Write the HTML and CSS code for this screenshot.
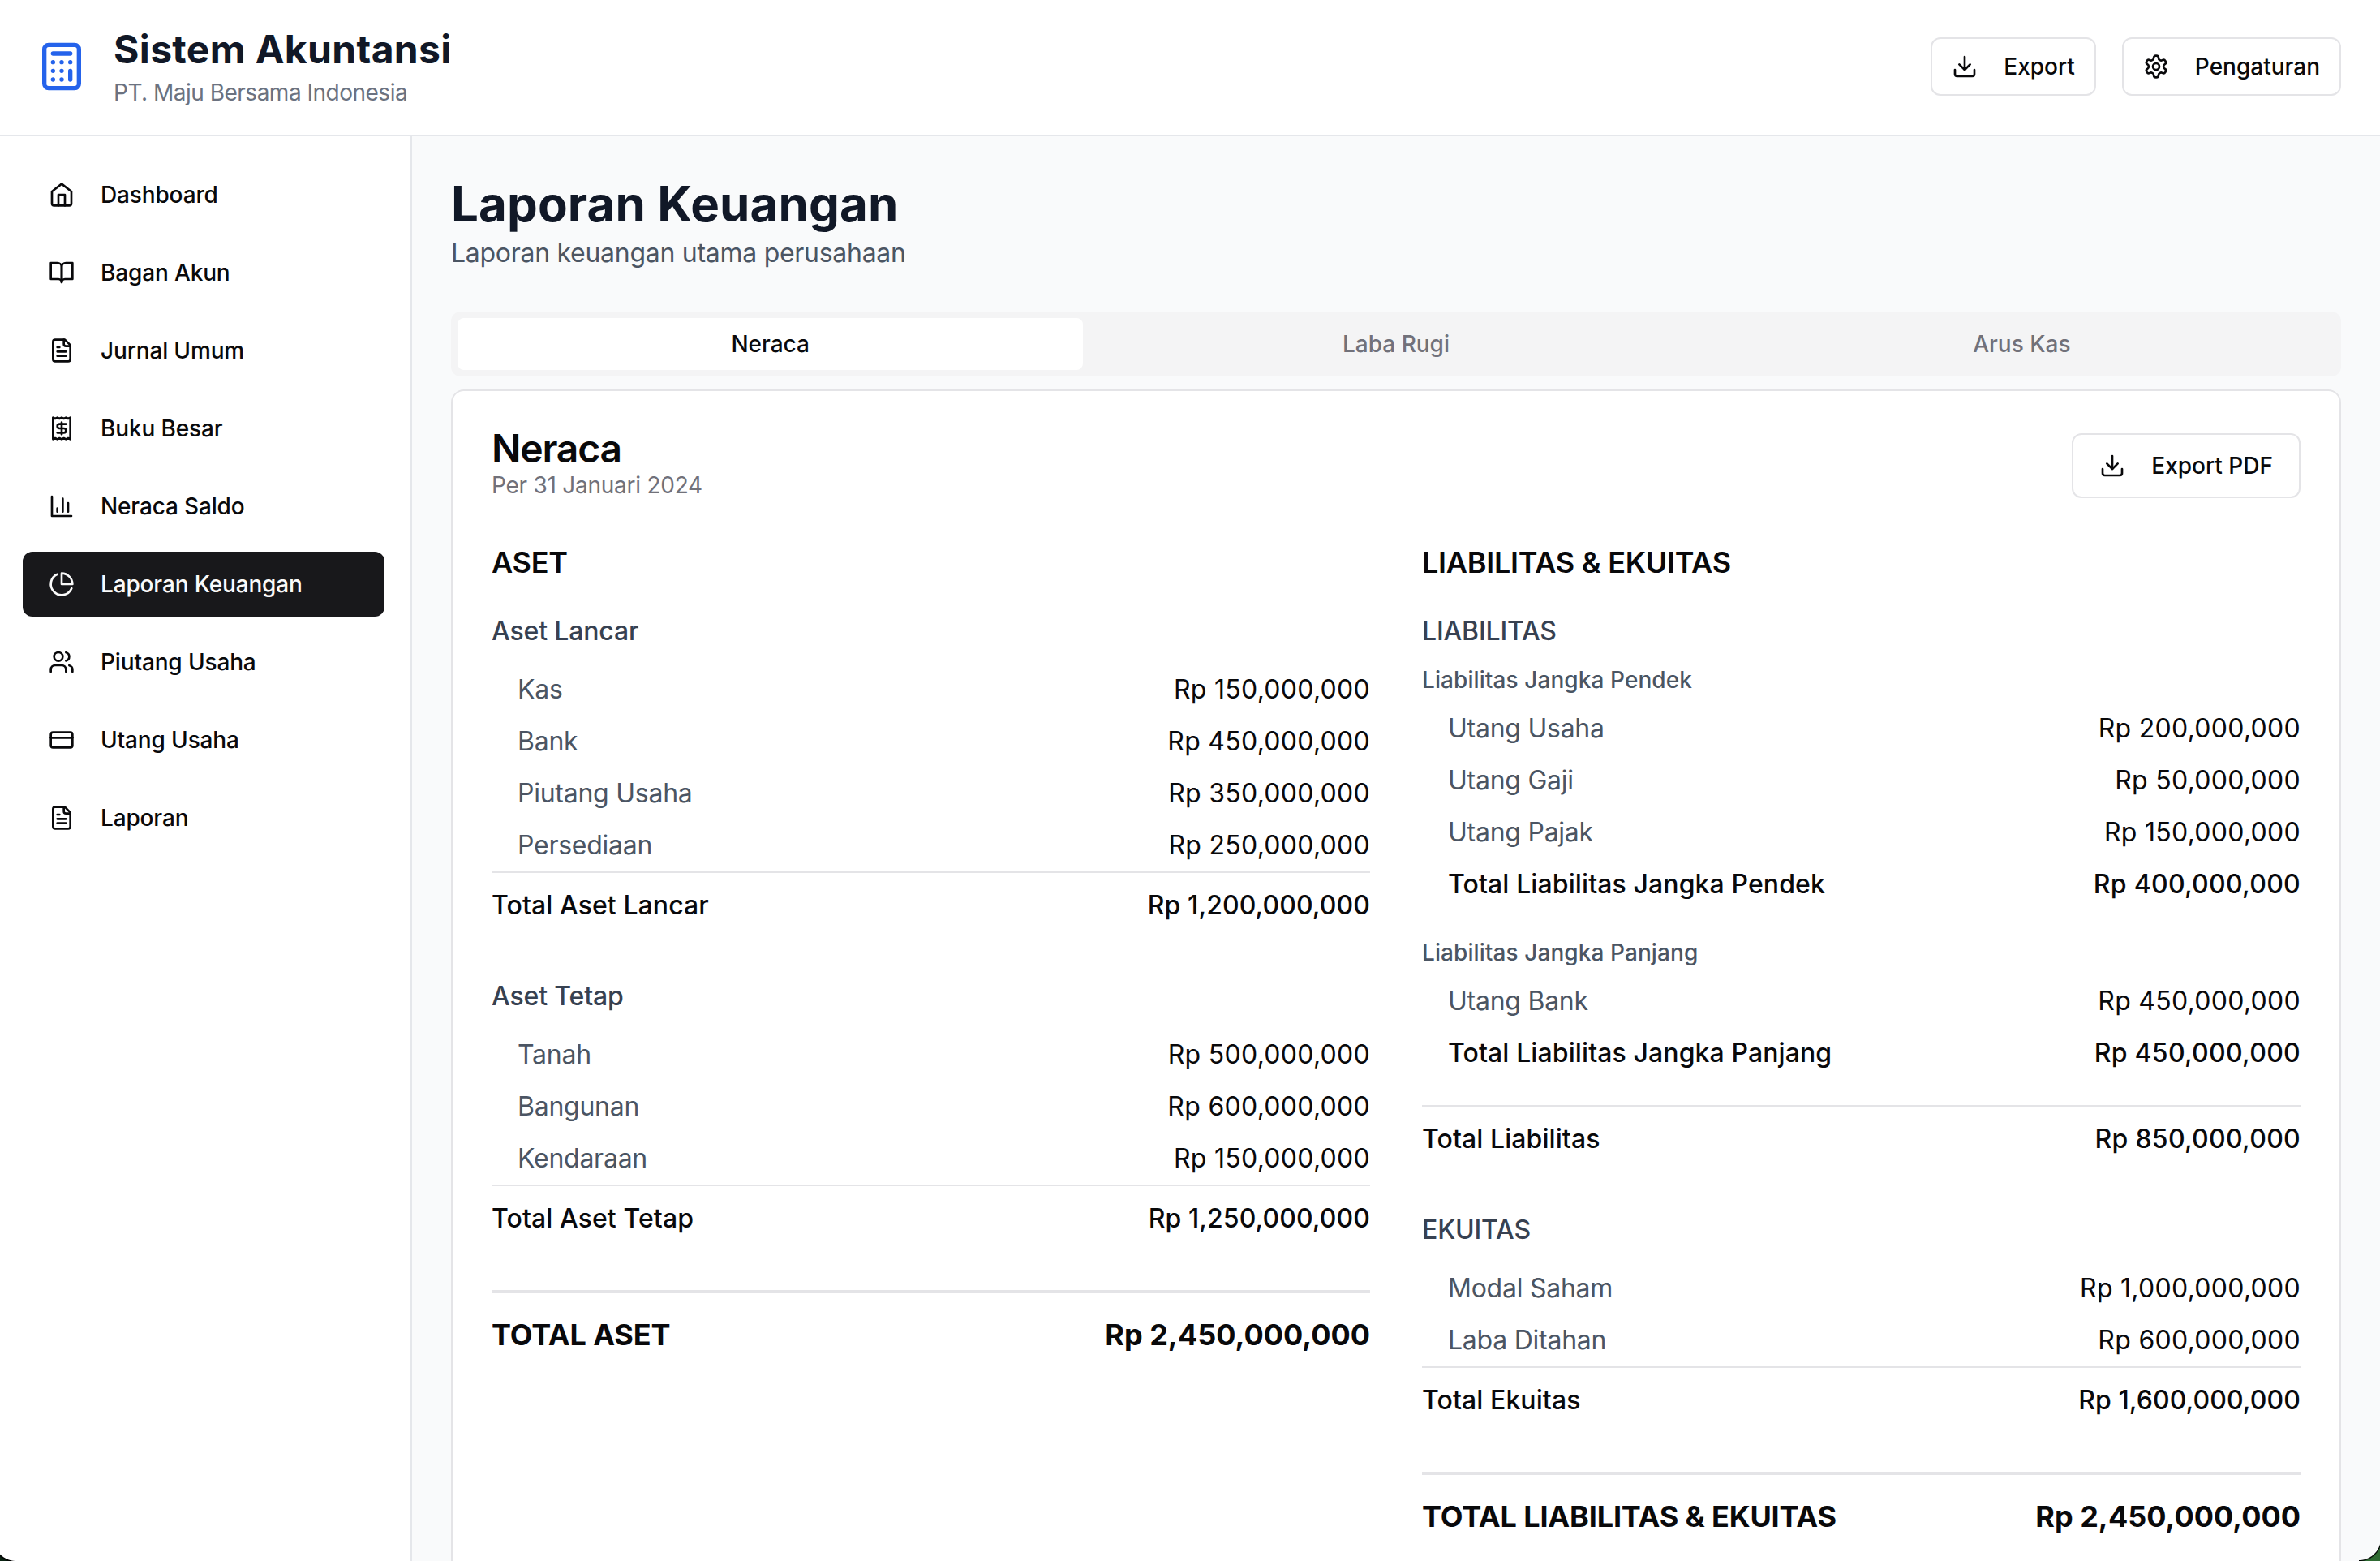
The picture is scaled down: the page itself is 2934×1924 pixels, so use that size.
FILE: index.html
```html
<!DOCTYPE html>
<html lang="id">
<head>
    <meta charset="UTF-8">
    <meta name="viewport" content="width=device-width, initial-scale=1.0">
    <title>Sistem Akuntansi</title>
    <link rel="stylesheet" href="styles.css">
</head>
<body>
    <!-- Header -->
    <header class="header">
        <div class="brand">
            <svg class="brand-icon" viewBox="0 0 24 24"><rect width="16" height="20" x="4" y="2" rx="2"/><path d="M8 6h8M16 14v4M16 10h.01M12 10h.01M8 10h.01M12 14h.01M8 14h.01M12 18h.01M8 18h.01"/></svg>
            <div>
                <h1 class="brand-title">Sistem Akuntansi</h1>
                <p class="brand-sub">PT. Maju Bersama Indonesia</p>
            </div>
        </div>
        <div class="header-actions">
            <button class="btn btn-sm">
                <svg class="icon" viewBox="0 0 24 24"><path d="M21 15v4a2 2 0 0 1-2 2H5a2 2 0 0 1-2-2v-4"/><path d="m7 10 5 5 5-5"/><path d="M12 15V3"/></svg>
                <span>Export</span>
            </button>
            <button class="btn btn-sm">
                <svg class="icon" viewBox="0 0 24 24"><path d="M12.22 2h-.44a2 2 0 0 0-2 2v.18a2 2 0 0 1-1 1.73l-.43.25a2 2 0 0 1-2 0l-.15-.08a2 2 0 0 0-2.73.73l-.22.38a2 2 0 0 0 .73 2.73l.15.1a2 2 0 0 1 1 1.72v.51a2 2 0 0 1-1 1.74l-.15.09a2 2 0 0 0-.73 2.73l.22.38a2 2 0 0 0 2.73.73l.15-.08a2 2 0 0 1 2 0l.43.25a2 2 0 0 1 1 1.73V20a2 2 0 0 0 2 2h.44a2 2 0 0 0 2-2v-.18a2 2 0 0 1 1-1.73l.43-.25a2 2 0 0 1 2 0l.15.08a2 2 0 0 0 2.73-.73l.22-.39a2 2 0 0 0-.73-2.73l-.15-.08a2 2 0 0 1-1-1.74v-.5a2 2 0 0 1 1-1.74l.15-.09a2 2 0 0 0 .73-2.73l-.22-.38a2 2 0 0 0-2.73-.73l-.15.08a2 2 0 0 1-2 0l-.43-.25a2 2 0 0 1-1-1.73V4a2 2 0 0 0-2-2z"/><circle cx="12" cy="12" r="3"/></svg>
                <span>Pengaturan</span>
            </button>
        </div>
    </header>

    <div class="layout">
        <!-- Sidebar -->
        <nav class="sidebar">
            <a class="nav-item">
                <svg class="icon" viewBox="0 0 24 24"><path d="m3 9 9-7 9 7v11a2 2 0 0 1-2 2H5a2 2 0 0 1-2-2z"/><path d="M9 22V12h6v10"/></svg>
                <span>Dashboard</span>
            </a>
            <a class="nav-item">
                <svg class="icon" viewBox="0 0 24 24"><path d="M2 3h6a4 4 0 0 1 4 4v14a3 3 0 0 0-3-3H2z"/><path d="M22 3h-6a4 4 0 0 0-4 4v14a3 3 0 0 1 3-3h7z"/></svg>
                <span>Bagan Akun</span>
            </a>
            <a class="nav-item">
                <svg class="icon" viewBox="0 0 24 24"><path d="M15 2H6a2 2 0 0 0-2 2v16a2 2 0 0 0 2 2h12a2 2 0 0 0 2-2V7Z"/><path d="M14 2v4a2 2 0 0 0 2 2h4"/><path d="M10 9H8M16 13H8M16 17H8"/></svg>
                <span>Jurnal Umum</span>
            </a>
            <a class="nav-item">
                <svg class="icon" viewBox="0 0 24 24"><path d="M4 2v20l2-1 2 1 2-1 2 1 2-1 2 1 2-1 2 1V2l-2 1-2-1-2 1-2-1-2 1-2-1-2 1Z"/><path d="M16 8h-6a2 2 0 1 0 0 4h4a2 2 0 1 1 0 4H8"/><path d="M12 17.5v-11"/></svg>
                <span>Buku Besar</span>
            </a>
            <a class="nav-item">
                <svg class="icon" viewBox="0 0 24 24"><path d="M3 3v18h18"/><path d="M18 17V9M13 17V5M8 17v-3"/></svg>
                <span>Neraca Saldo</span>
            </a>
            <a class="nav-item active">
                <svg class="icon" viewBox="0 0 24 24"><path d="M21.21 15.89A10 10 0 1 1 8 2.83"/><path d="M22 12A10 10 0 0 0 12 2v10z"/></svg>
                <span>Laporan Keuangan</span>
            </a>
            <a class="nav-item">
                <svg class="icon" viewBox="0 0 24 24"><path d="M16 21v-2a4 4 0 0 0-4-4H6a4 4 0 0 0-4 4v2"/><circle cx="9" cy="7" r="4"/><path d="M22 21v-2a4 4 0 0 0-3-3.87"/><path d="M16 3.13a4 4 0 0 1 0 7.75"/></svg>
                <span>Piutang Usaha</span>
            </a>
            <a class="nav-item">
                <svg class="icon" viewBox="0 0 24 24"><rect width="20" height="14" x="2" y="5" rx="2"/><path d="M2 10h20"/></svg>
                <span>Utang Usaha</span>
            </a>
            <a class="nav-item">
                <svg class="icon" viewBox="0 0 24 24"><path d="M15 2H6a2 2 0 0 0-2 2v16a2 2 0 0 0 2 2h12a2 2 0 0 0 2-2V7Z"/><path d="M14 2v4a2 2 0 0 0 2 2h4"/><path d="M10 9H8M16 13H8M16 17H8"/></svg>
                <span>Laporan</span>
            </a>
        </nav>

        <!-- Main Content -->
        <main class="main">
            <h2 class="page-title">Laporan Keuangan</h2>
            <p class="page-sub">Laporan keuangan utama perusahaan</p>

            <div class="tabs">
                <button class="tab active">Neraca</button>
                <button class="tab">Laba Rugi</button>
                <button class="tab">Arus Kas</button>
            </div>

            <section class="card">
                <div class="card-header">
                    <div>
                        <h3 class="card-title">Neraca</h3>
                        <p class="card-desc">Per 31 Januari 2024</p>
                    </div>
                    <button class="btn">
                        <svg class="icon" viewBox="0 0 24 24"><path d="M21 15v4a2 2 0 0 1-2 2H5a2 2 0 0 1-2-2v-4"/><path d="m7 10 5 5 5-5"/><path d="M12 15V3"/></svg>
                        <span>Export PDF</span>
                    </button>
                </div>

                <div class="columns">
                    <!-- Aset -->
                    <div class="column">
                        <h4 class="column-title">ASET</h4>
                        <div class="group">
                            <h5 class="group-title">Aset Lancar</h5>
                            <div class="row"><span class="label">Kas</span><span class="amount">Rp 150,000,000</span></div>
                            <div class="row"><span class="label">Bank</span><span class="amount">Rp 450,000,000</span></div>
                            <div class="row"><span class="label">Piutang Usaha</span><span class="amount">Rp 350,000,000</span></div>
                            <div class="row"><span class="label">Persediaan</span><span class="amount">Rp 250,000,000</span></div>
                            <div class="total"><span>Total Aset Lancar</span><span>Rp 1,200,000,000</span></div>
                        </div>
                        <div class="group">
                            <h5 class="group-title">Aset Tetap</h5>
                            <div class="row"><span class="label">Tanah</span><span class="amount">Rp 500,000,000</span></div>
                            <div class="row"><span class="label">Bangunan</span><span class="amount">Rp 600,000,000</span></div>
                            <div class="row"><span class="label">Kendaraan</span><span class="amount">Rp 150,000,000</span></div>
                            <div class="total"><span>Total Aset Tetap</span><span>Rp 1,250,000,000</span></div>
                        </div>
                        <div class="grand-total"><span class="grand-label">TOTAL ASET</span><span>Rp 2,450,000,000</span></div>
                    </div>

                    <!-- Liabilitas & Ekuitas -->
                    <div class="column">
                        <h4 class="column-title">LIABILITAS &amp; EKUITAS</h4>
                        <div class="group">
                            <h5 class="group-title">LIABILITAS</h5>
                            <div class="subgroup">
                                <h6 class="subgroup-title">Liabilitas Jangka Pendek</h6>
                                <div class="row"><span class="label">Utang Usaha</span><span class="amount">Rp 200,000,000</span></div>
                                <div class="row"><span class="label">Utang Gaji</span><span class="amount">Rp 50,000,000</span></div>
                                <div class="row"><span class="label">Utang Pajak</span><span class="amount">Rp 150,000,000</span></div>
                                <div class="row subtotal"><span>Total Liabilitas Jangka Pendek</span><span class="amount">Rp 400,000,000</span></div>
                            </div>
                            <div class="subgroup">
                                <h6 class="subgroup-title">Liabilitas Jangka Panjang</h6>
                                <div class="row"><span class="label">Utang Bank</span><span class="amount">Rp 450,000,000</span></div>
                                <div class="row subtotal"><span>Total Liabilitas Jangka Panjang</span><span class="amount">Rp 450,000,000</span></div>
                            </div>
                            <div class="total"><span>Total Liabilitas</span><span class="amount">Rp 850,000,000</span></div>
                        </div>
                        <div class="group">
                            <h5 class="group-title">EKUITAS</h5>
                            <div class="row"><span class="label">Modal Saham</span><span class="amount">Rp 1,000,000,000</span></div>
                            <div class="row"><span class="label">Laba Ditahan</span><span class="amount">Rp 600,000,000</span></div>
                            <div class="total"><span>Total Ekuitas</span><span>Rp 1,600,000,000</span></div>
                        </div>
                        <div class="grand-total"><span class="grand-label">TOTAL LIABILITAS &amp; EKUITAS</span><span>Rp 2,450,000,000</span></div>
                    </div>
                </div>
            </section>
        </main>
    </div>
</body>
</html>
```
FILE: styles.css
```css
* {
    box-sizing: border-box;
    margin: 0;
    padding: 0;
}

body {
    position: relative;
    height: 100vh;
    display: flex;
    flex-direction: column;
    overflow: hidden;
    font-family: Inter, sans-serif;
    font-size: 32px;
    line-height: 48px;
    color: #09090b;
    background-color: #f9fafb;
}

/* Rounded window corners */
body::before,
body::after {
    content: '';
    position: absolute;
    bottom: 0;
    width: 26px;
    height: 28px;
}

body::before {
    left: 0;
    width: 20px;
    background: radial-gradient(circle at 20px 0, transparent 27.5px, #000 28.5px, #0b2413 31px);
}

body::after {
    right: 0;
    background: radial-gradient(circle at 0 0, transparent 26.5px, #000 27.5px, #2f6b33 29px);
}

/* Header */
.header {
    flex-shrink: 0;
    display: flex;
    justify-content: space-between;
    align-items: center;
    height: 168px;
    padding: 30px 48px 32px 44px;
    background-color: #fff;
    border-bottom: 2px solid #e5e7eb;
}

.brand {
    display: flex;
    align-items: center;
    gap: 32px;
}

.brand-icon {
    width: 64px;
    height: 64px;
    fill: none;
    stroke: #2563eb;
    stroke-width: 2;
    stroke-linecap: round;
    stroke-linejoin: round;
}

.brand-title {
    font-size: 48px;
    line-height: 62px;
    padding-bottom: 2px;
    font-weight: 700;
    letter-spacing: 0.35px;
    color: #111827;
}

.brand-sub {
    font-size: 28px;
    line-height: 40px;
    letter-spacing: -0.5px;
    color: #6b7280;
}

.header-actions {
    display: flex;
    gap: 32px;
}

.icon {
    flex-shrink: 0;
    width: 32px;
    height: 32px;
    fill: none;
    stroke: currentColor;
    stroke-width: 2;
    stroke-linecap: round;
    stroke-linejoin: round;
}

.btn {
    display: flex;
    align-items: center;
    gap: 32px;
    height: 80px;
    padding: 0 32px;
    font-family: inherit;
    font-size: 28px;
    font-weight: 500;
    color: #09090b;
    background-color: #fff;
    border: 2px solid #e4e4e7;
    border-radius: 12px;
}

.btn-sm {
    height: 72px;
    padding: 0 24px;
}

/* Sidebar */
.layout {
    flex: 1;
    display: flex;
    min-height: 0;
}

.sidebar {
    flex-shrink: 0;
    display: flex;
    flex-direction: column;
    gap: 16px;
    width: 508px;
    padding: 32px 32px 32px 28px;
    background-color: #fff;
    border-right: 2px solid #e5e7eb;
}

.nav-item {
    display: flex;
    align-items: center;
    gap: 32px;
    height: 80px;
    padding: 0 32px;
    font-size: 28px;
    font-weight: 500;
    letter-spacing: -0.15px;
    border-radius: 12px;
}

.nav-item.active {
    color: #fafafa;
    background-color: #18181b;
}

/* Main Content */
.main {
    flex: 1;
    padding: 48px;
}

.page-title {
    font-size: 60px;
    line-height: 70px;
    padding-bottom: 2px;
    font-weight: 700;
    letter-spacing: 0.12px;
    color: #111827;
}

.page-sub {
    letter-spacing: -0.28px;
    color: #4b5563;
}

.tabs {
    display: grid;
    grid-template-columns: repeat(3, 1fr);
    height: 80px;
    margin-top: 48px;
    padding: 8px;
    background-color: #f4f4f5;
    border-radius: 12px;
}

.tab {
    font-family: inherit;
    font-size: 28px;
    font-weight: 500;
    color: #71717a;
    background: none;
    border: none;
    border-radius: 8px;
}

.tab.active {
    color: #09090b;
    background-color: #fff;
}

/* Card */
.card {
    margin-top: 16px;
    padding: 48px;
    background-color: #fff;
    border: 2px solid #e4e4e7;
    border-radius: 16px;
}

.card-header {
    display: flex;
    justify-content: space-between;
    align-items: center;
    margin-bottom: 48px;
}

.card-title {
    font-size: 48px;
    line-height: 46px;
    padding-bottom: 2px;
    font-weight: 600;
    letter-spacing: -1.2px;
}

.card-desc {
    font-size: 28px;
    line-height: 40px;
    letter-spacing: -0.25px;
    color: #71717a;
}

.columns {
    display: grid;
    grid-template-columns: 1fr 1fr;
    gap: 64px;
}

.column-title {
    margin-bottom: 32px;
    padding-bottom: 2px;
    font-size: 36px;
    line-height: 54px;
    font-weight: 600;
    letter-spacing: -0.25px;
}

.group {
    margin-bottom: 48px;
}

.group-title {
    margin-bottom: 16px;
    font-size: 32px;
    font-weight: 500;
    letter-spacing: -0.15px;
    color: #374151;
}

.subgroup {
    margin-bottom: 32px;
}

.subgroup-title {
    margin-bottom: 8px;
    font-size: 28px;
    line-height: 40px;
    font-weight: 500;
    letter-spacing: 0.08px;
    color: #4b5563;
}

.row {
    display: flex;
    justify-content: space-between;
    padding: 8px 0 8px 32px;
}

.label {
    letter-spacing: -0.25px;
    color: #4b5563;
}

.amount {
    letter-spacing: 0.28px;
}

.subtotal {
    font-weight: 500;
    letter-spacing: 0.1px;
}

.total {
    display: flex;
    justify-content: space-between;
    padding: 16px 0;
    font-weight: 500;
    letter-spacing: 0.08px;
    border-top: 2px solid #e4e4e7;
}

.grand-total {
    display: flex;
    justify-content: space-between;
    padding: 24px 0 26px;
    font-size: 36px;
    line-height: 54px;
    font-weight: 700;
    border-top: 4px solid #e4e4e7;
}

.grand-label {
    letter-spacing: -0.15px;
}
```
